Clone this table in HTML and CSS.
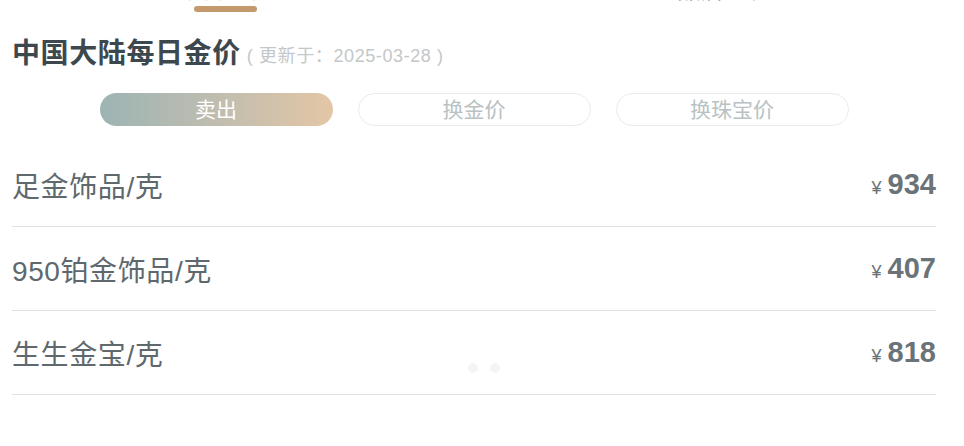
FILE: index.html
```html
<!DOCTYPE html>
<html lang="zh">
<head>
<meta charset="utf-8">
<link rel="stylesheet" href="styles.css">
</head>
<body>
<div class="page">
  <div class="tabs">
    <div class="tab tab-active"><span class="tab-label">今日金价</span><span class="tab-bar"></span></div>
    <div class="tab"><span class="tab-label">品牌金价</span></div>
  </div>

  <h1 class="title">中国大陆每日金价<span class="updated">( 更新于：2025-03-28 )</span></h1>

  <div class="segments">
    <div class="seg seg-active">卖出</div>
    <div class="seg">换金价</div>
    <div class="seg">换珠宝价</div>
  </div>

  <div class="list">
    <div class="row"><span class="name">足金饰品/克</span><span class="price"><span class="yen">¥</span>934</span></div>
    <div class="row"><span class="name">950铂金饰品/克</span><span class="price"><span class="yen">¥</span>407</span></div>
    <div class="row"><span class="name">生生金宝/克</span><span class="price"><span class="yen">¥</span>818</span></div>
    <div class="dots"><span class="dot"></span><span class="dot"></span></div>
  </div>
</div>
</body>
</html>
```
FILE: styles.css
```css
* { box-sizing: border-box; }
html, body { margin: 0; padding: 0; background: #fff; }
body {
  font-family: "Liberation Sans", "Noto Sans CJK SC", sans-serif;
  overflow: hidden;
}
.page { padding: 0 28px 0 12px; width: 964px; }

.tabs {
  display: flex;
  margin-top: -22px;
  margin-left: 88px;
}
.tab {
  width: 250px;
  display: flex;
  flex-direction: column;
  align-items: center;
  color: #555c60;
}
.tab + .tab { margin-left: 250px; }
.tab-label { font-size: 24px; line-height: 24px; height: 24px; }
.tab-active { color: #c49a6c; }
.tab-bar {
  margin-top: 4px;
  width: 63px;
  height: 6px;
  border-radius: 3px;
  background: #c49a6c;
}
.tab:not(.tab-active)::after { content: ""; height: 10px; }

.title {
  margin: 22px 0 0;
  font-size: 28px;
  line-height: 36px;
  font-weight: bold;
  letter-spacing: 0.6px;
  color: #3d484e;
  display: flex;
  align-items: center;
}
.updated {
  font-size: 18px;
  font-weight: normal;
  letter-spacing: 0.6px;
  color: #c3c7c9;
  margin-left: 6px;
  margin-top: 4px;
}

.segments {
  display: flex;
  justify-content: center;
  gap: 25px;
  margin-top: 19px;
}
.seg {
  width: 233px;
  height: 33px;
  border-radius: 17px;
  border: 1px solid #e9ebeb;
  font-size: 21px;
  line-height: 31px;
  text-align: center;
  color: #b8c2c3;
}
.seg-active {
  border: none;
  line-height: 33px;
  color: #fff;
  background: linear-gradient(90deg, #9db4b3 0%, #bcbcb0 45%, #e4c6a6 100%);
}

.list { position: relative; margin-top: 17px; }
.row {
  height: 84px;
  display: flex;
  align-items: center;
  justify-content: space-between;
  border-bottom: 1px solid #e2e2e2;
}
.name {
  font-size: 28px;
  letter-spacing: 0.6px;
  color: #5e686d;
}
.price {
  font-size: 29px;
  font-weight: bold;
  color: #6a7378;
}
.yen {
  font-size: 18px;
  font-weight: normal;
  margin-right: 6px;
}
.dots {
  position: absolute;
  left: 456px;
  top: 220px;
  display: flex;
  gap: 12px;
}
.dot {
  width: 10px;
  height: 10px;
  border-radius: 50%;
  background: #f4f4f4;
}
```
